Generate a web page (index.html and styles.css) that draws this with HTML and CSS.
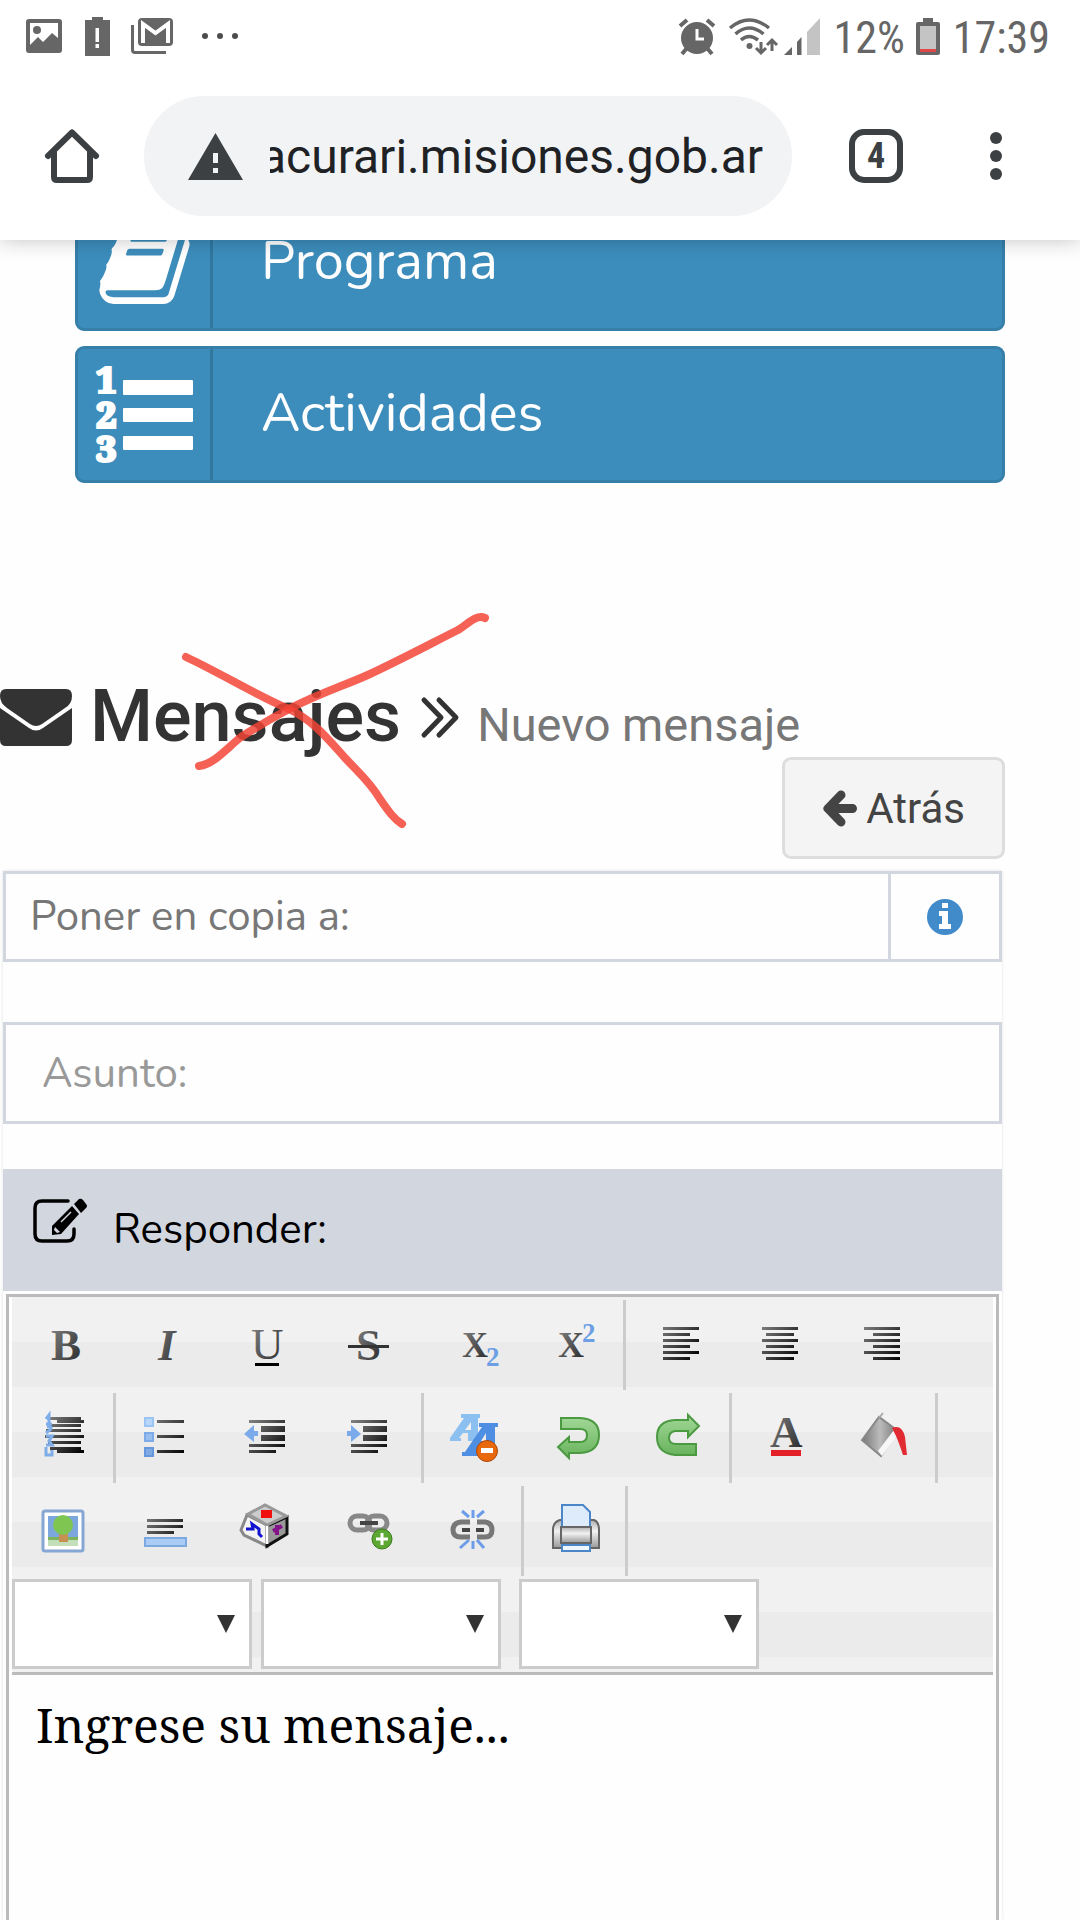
FILE: index.html
```html
<!DOCTYPE html>
<html lang="es">
<head>
<meta charset="utf-8">
<meta name="viewport" content="width=device-width, initial-scale=1">
<title>Mensajes - Nuevo mensaje</title>
<link rel="stylesheet" href="styles.css">
</head>
<body>
<header class="top">
  <div class="status">
    <svg class="status-photo" width="36" height="34" viewBox="0 0 36 34"><path fill="#666" fill-rule="evenodd" d="M3 0H33Q36 0 36 3V31Q36 34 33 34H3Q0 34 0 31V3Q0 0 3 0ZM4 4V26L12 18L17 23L26 14L32 19V4Z"/><circle cx="11" cy="11" r="4" fill="#666"/></svg>
    <svg class="status-alert" width="25" height="39" viewBox="0 0 25 39"><path fill="#666" fill-rule="evenodd" d="M7 0H18V3H25V39H0V3H7ZM10.500 11V25H14V11ZM10.500 27V31H14V27Z"/></svg>
    <svg class="status-mail" width="42" height="36" viewBox="0 0 42 36"><path fill="none" stroke="#666" stroke-width="3" d="M1.500 7V32Q1.500 34.500 4 34.500H35"/><rect x="7" y="0" width="35" height="28" rx="4" fill="#666"/><path fill="none" stroke="#fff" stroke-width="4" d="M12 25V6L24.500 15L37 6V25"/></svg>
    <svg class="status-more" width="38" height="8" viewBox="0 0 38 8"><g fill="#4c4c4c"><circle cx="4" cy="4" r="3"/><circle cx="19" cy="4" r="3"/><circle cx="34" cy="4" r="3"/></g></svg>
    <svg class="status-alarm" width="36" height="37" viewBox="0 0 36 37"><g fill="none" stroke="#666" stroke-width="4"><path d="M1 8L8 2M35 8L28 2M8 30L3 36M28 30L33 36"/></g><circle cx="18" cy="20" r="16" fill="#666"/><path fill="none" stroke="#fff" stroke-width="3" d="M18 11V21H25"/></svg>
    <svg class="status-wifi" width="49" height="37" viewBox="0 0 49 37"><g fill="none" stroke="#666" stroke-width="3.500"><path d="M1 10Q20 -6 40 10M6.500 16Q20 4 34.500 16M12 22Q20 15 29 22"/><path stroke-width="3" d="M32 24V35M27 30L32 35L37 30M43 33V22M38 27L43 22L48 27"/></g><circle cx="20.500" cy="28" r="3" fill="#666"/></svg>
    <svg class="status-signal" width="36" height="37" viewBox="0 0 36 37"><path fill="#c4c4c4" d="M23 14L36 0V37H23Z"/><path fill="#666" d="M0 37L8 29V37ZM13 24L17.500 19V37H13Z"/></svg>
    <span class="status-text status-charge">12%</span>
    <svg class="status-battery" width="24" height="37" viewBox="0 0 24 37"><path fill="#666" d="M7 0H17V4H22Q24 4 24 6V35Q24 37 22 37H2Q0 37 0 35V6Q0 4 2 4H7Z"/><path fill="#c4c4c4" d="M4 8H20V33H4Z"/><path fill="#e04848" d="M4 31H20V34H4Z"/></svg>
    <time class="status-text">17:39</time>
  </div>
  <nav class="browser" aria-label="Navegador">
    <button class="icon-button" aria-label="Inicio"><svg width="54" height="54" viewBox="0 0 54 54"><path fill="none" stroke="#3c4043" stroke-width="6" stroke-linecap="round" stroke-linejoin="round" d="M3 27L27 3.500L51 27M9 23V48Q9 51 12 51H42Q45 51 45 48V23"/></svg></button>
    <div class="address">
      <svg width="55" height="47" viewBox="0 0 55 47"><path fill="#3c4043" fill-rule="evenodd" d="M27.500 0L55 47H0ZM25 20V30H30V20ZM25 35V40H30V35Z"/></svg>
      <input class="url" type="text" dir="rtl" value="acurari.misiones.gob.ar" aria-label="Dirección">
    </div>
    <button class="icon-button tabs" aria-label="Pestañas">4</button>
    <button class="icon-button" aria-label="Menú"><svg width="12" height="50" viewBox="0 0 12 50"><g fill="#3c4043"><circle cx="6" cy="7" r="6"/><circle cx="6" cy="25" r="6"/><circle cx="6" cy="43" r="6"/></g></svg></button>
  </nav>
</header>

<main class="page">
  <div class="sections">
    <a class="section" href="#programa">
      <span class="section-icon"><svg width="97" height="97" viewBox="0 0 1792 1792"><path fill="#fff" d="M1703 478q40 57 18 129l-275 906q-19 64-76.500 107.500t-122.500 43.500h-923q-77 0-148.500-53.500t-99.500-131.500q-24-67-2-127 0-4 3-27t4-37q1-8-3-21.500t-3-19.500q2-11 8-21t16.500-23.500 16.500-23.500q23-38 45-91.500t30-91.500q3-10 .5-30t-.5-28q3-11 17-28t17-23q21-36 42-92t25-90q1-9-2.500-32t.5-28q4-13 22-30.500t22-22.500q19-26 42.500-84.500t27.500-96.500q1-8-3-25.500t-2-26.500q2-8 9-18t18-23 17-21q8-12 16.500-30.500t15-35 16-36 19.500-32 26.500-23.500 36-11.500 47.500 5.500l-1 3q38-9 51-9h761q74 0 114 56t18 130l-274 906q-36 119-71.500 153.500t-128.500 34.500h-869q-27 0-38 15-11 16-1 43 24 70 144 70h923q29 0 56-15.500t35-41.500l300-987q7-22 5-57 38 15 59 43zm-1064 2q-4 13 2 22.500t20 9.500h608q13 0 25.500-9.500t16.500-22.500l21-64q4-13-2-22.500t-20-9.500h-608q-13 0-25.500 9.500t-16.500 22.500zm-83 256q-4 13 2 22.500t20 9.500h608q13 0 25.500-9.500t16.500-22.500l21-64q4-13-2-22.500t-20-9.500h-608q-13 0-25.500 9.500t-16.500 22.500z"/></svg></span>
      <span class="section-name">Programa</span>
    </a>
    <a class="section" href="#actividades">
      <span class="section-icon"><svg width="97" height="97" viewBox="0 0 97 97"><g class="list-digit"><text x="0" y="27">1</text><text x="0" y="62">2</text><text x="0" y="96">3</text></g><g fill="#fff"><rect x="27" y="14" width="70" height="15" rx="1"/><rect x="27" y="42" width="70" height="14" rx="1"/><rect x="27" y="70" width="70" height="14" rx="1"/></g></svg></span>
      <span class="section-name">Actividades</span>
    </a>
  </div>

  <div class="heading">
    <h1 class="title">
      <svg class="title-mail" width="72" height="57" viewBox="0 0 72 57"><path fill="#333" d="M6 0H66Q72 0 72 7Q72 15 65 19L42 35Q36 39 30 35L7 19Q0 14 0 7Q0 0 6 0ZM0 19L29 39Q36 44 43 39L72 19V51Q72 57 66 57H6Q0 57 0 51Z"/></svg>
      <span class="title-main">Mensajes</span>
      <svg class="title-arrows" width="38" height="41" viewBox="0 0 38 41"><path fill="none" stroke="#333" stroke-width="5" stroke-linecap="round" stroke-linejoin="round" d="M3 3L20 20.500L3 38M18 3L35 20.500L18 38"/></svg>
      <small class="title-sub">Nuevo mensaje</small>
    </h1>
    <svg class="scrawl" width="320" height="230" viewBox="0 0 320 230" aria-hidden="true"><g fill="none" stroke="#f44336" stroke-width="8" stroke-linecap="round" stroke-linejoin="round" stroke-opacity=".84"><path d="M16 46C50 62 90 86 119 98C144 110 158 128 176 148C190 163 200 171 210 188C219 201 224 208 232 213"/><path d="M29 155C44 153 56 138 71 126C90 114 104 106 119 98C150 82 176 74 200 63C236 46 262 32 288 19C298 13 306 3 315 7"/></g></svg>
  </div>

  <button class="back"><svg width="35" height="37" viewBox="0 0 35 37"><path fill="none" stroke="#444" stroke-width="9" stroke-linecap="round" stroke-linejoin="round" d="M19 5L6 18.500L19 32M7 18.500H30.500"/></svg>Atrás</button>

  <form class="compose">
    <div class="copy-row">
      <input class="field field-copy" type="text" placeholder="Poner en copia a:" aria-label="Poner en copia a">
      <button class="info" type="button" aria-label="Información"><svg width="36" height="36" viewBox="0 0 36 36"><circle cx="18" cy="18" r="18" fill="#428bca"/><path fill="#fff" d="M15 4H21V9H15ZM12 12H21V25H24V30H12V25H15V17H12Z"/></svg></button>
    </div>
    <input class="field field-subject" type="text" placeholder="Asunto:" aria-label="Asunto">

    <label class="reply" for="message">
      <svg width="54" height="44" viewBox="0 0 54 44"><path fill="none" stroke="#000" stroke-width="3.500" stroke-linecap="round" d="M35 2H9Q2 2 2 9V35Q2 42 9 42H34Q41 42 41 35V30"/><path d="M41 5L46 0Q48 -1 50 1L53 5Q55 7 53 9L48 14ZM39 7L46 15L28 35L19 36L19 27Z"/><path stroke="#d2d6de" stroke-width="1.500" fill="none" d="M28 23L38 13"/><path fill="#d2d6de" d="M22 28L27 33L24 34L21 31Z"/></svg>
      Responder:
    </label>

    <div class="editor">
      <div class="tools">
        <svg class="defs" width="0" height="0" aria-hidden="true"><defs>
          <linearGradient id="ink" x1="0" y1="0" x2="1" y2="1"><stop offset="0" stop-color="#888"/><stop offset="1" stop-color="#222"/></linearGradient>
          <linearGradient id="line" gradientUnits="userSpaceOnUse" x1="30" y1="25" x2="70" y2="60"><stop offset="0" stop-color="#888"/><stop offset="1" stop-color="#000"/></linearGradient>
          <linearGradient id="leaf" x1="0" y1="0" x2="0" y2="1"><stop offset="0" stop-color="#a0d796"/><stop offset="1" stop-color="#69b35d"/></linearGradient>
          <linearGradient id="steel" x1="0" y1="0" x2="1" y2="0"><stop offset="0" stop-color="#777"/><stop offset=".5" stop-color="#bbb"/><stop offset="1" stop-color="#777"/></linearGradient>
          <linearGradient id="shell" x1="0" y1="0" x2="0" y2="1"><stop offset="0" stop-color="#b0b0b0"/><stop offset=".4" stop-color="#f2f2f2"/><stop offset="1" stop-color="#999"/></linearGradient>
        </defs></svg>
        <div class="tool-row">
          <button class="tool" type="button" aria-label="Negrita"><svg width="102" height="90"><text class="glyph glyph-bold" x="39" y="60">B</text></svg></button>
          <button class="tool" type="button" aria-label="Cursiva"><svg width="102" height="90"><text class="glyph glyph-bold glyph-italic" x="44" y="60">I</text></svg></button>
          <button class="tool" type="button" aria-label="Subrayado"><svg width="102" height="90"><text class="glyph" x="35" y="59">U</text><path d="M39 63h24v3H39z"/></svg></button>
          <button class="tool" type="button" aria-label="Tachado"><svg width="102" height="90"><text class="glyph glyph-bold" x="38" y="60">S</text><path fill="#333" d="M30 45h41v3H30z"/></svg></button>
          <button class="tool" type="button" aria-label="Subíndice"><svg width="102" height="90"><text class="glyph glyph-x" x="42" y="57">X</text><text class="glyph-two" x="66" y="66">2</text></svg></button>
          <button class="tool" type="button" aria-label="Superíndice"><svg width="102" height="90"><text class="glyph glyph-x" x="36" y="57">X</text><text class="glyph-two" x="60" y="42">2</text></svg></button>
          <span class="divider"></span>
          <button class="tool" type="button" aria-label="Alinear a la izquierda"><svg width="102" height="90"><path fill="url(#line)" d="M37 27h36v3H37zM37 33h27v3H37zM37 39h36v3H37zM37 45h27v3H37zM37 51h36v3H37zM37 57h27v3H37z"/></svg></button>
          <button class="tool" type="button" aria-label="Centrar"><svg width="102" height="90"><path fill="url(#line)" d="M34 27h36v3H34zM38 33h28v3H38zM34 39h36v3H34zM38 45h28v3H38zM34 51h36v3H34zM38 57h28v3H38z"/></svg></button>
          <button class="tool" type="button" aria-label="Alinear a la derecha"><svg width="102" height="90"><path fill="url(#line)" d="M34 27h36v3H34zM43 33h27v3H43zM34 39h36v3H34zM43 45h27v3H43zM34 51h36v3H34zM43 57h27v3H43z"/></svg></button>
        </div>
        <div class="tool-row">
          <button class="tool" type="button" aria-label="Lista numerada"><svg width="102" height="90"><path fill="url(#line)" d="M36 24h33v3H36zM45 27h27v3H45zM36 31h33v3H36zM34 36h35v3H34zM33 42h39v3H33zM36 48h33v3H36zM38 54h31v3H38zM45 57h27v3H45z"/><path fill="none" stroke="#7fadea" stroke-width="3" d="M34 26L37 22V30M34 31H40M35 34Q41 33 38 37L34 40M34 43H40L37 48L40 52L34 52M34 54V62H40V57"/></svg></button>
          <span class="divider"></span>
          <button class="tool" type="button" aria-label="Lista"><svg width="102" height="90"><g stroke-width="2"><path fill="#b8d6f8" stroke="#9cc4f3" d="M29 25h8v8h-8z"/><path fill="#98bef0" stroke="#7dabea" d="M29 40h8v8h-8z"/><path fill="#7fa9e2" stroke="#6696dc" d="M29 55h8v8h-8z"/></g><path fill="url(#line)" d="M41 27h27v3H41zM41 42h27v3H41zM41 57h27v3H41z"/></svg></button>
          <button class="tool" type="button" aria-label="Reducir sangría"><svg width="102" height="90"><path fill="url(#line)" d="M31 27h36v3H31zM43 33h24v6H43zM43 42h24v6H43zM31 51h36v3H31zM31 57h27v3H31z"/><path fill="#7aaaea" d="M26 41L36 32V38H40V43H36V49Z"/></svg></button>
          <button class="tool" type="button" aria-label="Aumentar sangría"><svg width="102" height="90"><path fill="url(#line)" d="M31 27h36v3H31zM43 33h24v6H43zM43 42h24v6H43zM31 51h36v3H31zM31 57h27v3H31z"/><path fill="#7aaaea" d="M41 41L31 32V38H27V43H31V49Z"/></svg></button>
          <span class="divider"></span>
          <button class="tool" type="button" aria-label="Quitar formato"><svg width="102" height="90"><path fill="#8cc0f0" d="M37 21H56V25H54V48H44V40H39L35 45H37V48H26V45L40 25H37ZM47 29L41 37H47Z"/><path fill="#4e8fe4" d="M55 30H74V34H71V58H60V52H56L52 59H54V63H38V59H41L58 34H55ZM62 40L57 48H62Z"/><circle cx="63" cy="58" r="10.500" fill="#e8690c" stroke="#b04505"/><path fill="#fff" d="M57 55h12v5H57z"/></svg></button>
          <button class="tool" type="button" aria-label="Deshacer"><svg width="102" height="90"><path fill="url(#leaf)" stroke="#4b9a42" stroke-width="2" d="M35 25H54Q73 26 73 42Q73 59 54 60H43V65L32 54L43 44V49H54Q61 49 61 42Q61 36 54 36H35Z"/></svg></button>
          <button class="tool" type="button" aria-label="Rehacer"><svg width="102" height="90"><path fill="url(#leaf)" stroke="#4b9a42" stroke-width="2" d="M68 62H47Q29 60 29 44Q29 28 47 27H60V22L71 33L60 44V38H47Q41 39 41 45Q41 51 48 51H68Z"/></svg></button>
          <span class="divider"></span>
          <button class="tool" type="button" aria-label="Color de texto"><svg width="102" height="90"><text class="glyph glyph-bold" x="38" y="54">A</text><path fill="#e32028" d="M39 57h30v6H39z"/></svg></button>
          <button class="tool" type="button" aria-label="Color de fondo"><svg width="102" height="90"><path fill="url(#steel)" stroke="#888" stroke-width="2" d="M28 47L45 24L64 38L47 63Z"/><path fill="#f7f7f7" d="M44 58L60 37L65 40L48 63Z"/><path stroke="#aaa" stroke-width="2" fill="none" d="M45 25L49 20"/><path fill="#e22a32" d="M58 35Q68 31 71 44L73 62L69 62Q65 50 62 43Z"/></svg></button>
          <span class="divider"></span>
        </div>
        <div class="tool-row">
          <button class="tool" type="button" aria-label="Imagen"><svg width="102" height="90"><rect x="31" y="25" width="40" height="40" rx="2" fill="#fff" stroke="#86a7d4" stroke-width="3"/><path fill="#7ba7dc" d="M36 30h30v22H36z"/><path fill="#c3dfb9" d="M36 52h30v8H36z"/><path fill="#7db35c" d="M36 51h30v3H36z"/><path fill="#c78f50" d="M47 48h9v8h-9z"/><circle cx="51" cy="39" r="10" fill="#7fc552"/></svg></button>
          <button class="tool" type="button" aria-label="Línea horizontal"><svg width="102" height="90"><path fill="url(#line)" d="M33 33h36v3H33zM33 39h36v3H33zM33 45h27v3H33z"/><path fill="#a9cbf4" stroke="#7da9e2" stroke-width="2" d="M31 52h41v8H31z"/></svg></button>
          <button class="tool" type="button" aria-label="Subir imagen"><svg width="102" height="90"><path fill="#f4f4f4" stroke="#888" stroke-width="3" d="M31 29L25 44L28 49L51 60V39Z"/><path fill="#999" stroke="#111" stroke-width="3" d="M71 31V48L51 60V40Z"/><path fill="#ccc" stroke="#999" stroke-width="3" d="M32 28L49 19L70 30L51 39Z"/><path stroke="#fff" stroke-width="3" d="M51 40V58"/><path fill="#f01010" d="M45 24h11v8H45z"/><path fill="none" stroke="#1212d0" stroke-width="3" d="M30 43H37L36 38L43 43V48L46 51"/><path fill="none" stroke="#84128a" stroke-width="4" d="M57 45L66 40M61 39V49"/></svg></button>
          <button class="tool" type="button" aria-label="Insertar enlace"><svg width="102" height="90"><g fill="none" stroke="#888" stroke-width="5"><rect x="32" y="30" width="20" height="14" rx="7"/><rect x="49" y="30" width="20" height="14" rx="7"/></g><path stroke="#444" stroke-width="4" d="M42 37H60"/><circle cx="64" cy="53" r="10" fill="#5ca832" stroke="#3c7b1c"/><path fill="none" stroke="#fff" stroke-width="3" d="M64 47V59M58 53H70"/></svg></button>
          <button class="tool" type="button" aria-label="Quitar enlace"><svg width="102" height="90"><g fill="none" stroke="#777" stroke-width="5"><path d="M50 36H41Q33 37 33 44Q33 51 41 51H50M57 36H65Q72 37 72 44Q72 51 65 51H57"/><path stroke="#444" stroke-width="4" d="M42 44H50M56 44H64"/></g><path fill="none" stroke="#6d9de8" stroke-width="3" d="M42 25L49 31M64 25L57 31M53 24V32M40 62L49 54M64 62L57 54M53 63V55"/></svg></button>
          <span class="divider"></span>
          <button class="tool" type="button" aria-label="Imprimir"><svg width="102" height="90"><path fill="url(#shell)" stroke="#666" stroke-width="2" d="M36 34H70Q75 36 75 44V62H29V44Q29 36 36 34Z"/><path fill="#ddebfb" stroke="#4a86c8" stroke-width="2" d="M38 41V19H59L66 26V41Z"/><path fill="url(#shell)" stroke="#666" stroke-width="2" d="M37 41H67V57H37Z"/><path fill="#eef5fd" stroke="#4a86c8" stroke-width="2" d="M38 59H66V65H38Z"/></svg></button>
          <span class="divider"></span>
        </div>
        <div class="tool-row">
          <span class="picker"><select aria-label="Tamaño"><option></option></select></span>
          <span class="picker"><select aria-label="Fuente"><option></option></select></span>
          <span class="picker picker-apart"><select aria-label="Formato"><option></option></select></span>
        </div>
      </div>
      <textarea class="message" id="message">Ingrese su mensaje...</textarea>
    </div>
  </form>
</main>
</body>
</html>
```
FILE: styles.css
```css
* {
  box-sizing: border-box;
}

body {
  margin: 0;
  min-height: 100vh;
  display: flex;
  flex-direction: column;
  background: #fefefe;
  font-family: Roboto, sans-serif;
  color: #333;
}

svg {
  display: block;
  flex: none;
  overflow: visible;
}

button,
input,
select,
textarea {
  margin: 0;
  padding: 0;
  border: 0;
  border-radius: 0;
  background: none;
  font: inherit;
  color: inherit;
  outline: 0;
}

/* Status bar and browser bar */

.top {
  position: relative;
  z-index: 1;
  background: #fff;
  box-shadow: 0 0 20px rgba(0, 0, 0, 0.24);
}

.status {
  display: flex;
  align-items: center;
  height: 72px;
  padding: 0 30px 0 26px;
}

.status-alert {
  margin-left: 23px;
}

.status-mail {
  margin-left: 21px;
}

.status-more {
  margin-left: 28px;
}

.status-alarm {
  margin-left: auto;
}

.status-wifi {
  margin-left: 14px;
}

.status-signal {
  margin-left: 6px;
}

.status-text {
  padding-top: 3px;
  font: 44px "Roboto Condensed", Roboto, sans-serif;
  color: #666;
}

.status-charge {
  margin: 0 11px 0 14px;
}

.status-battery {
  margin-right: 13px;
}

.browser {
  display: flex;
  align-items: center;
  height: 168px;
  padding: 0 78px 0 45px;
}

.icon-button {
  flex: none;
}

.address {
  flex: 1;
  min-width: 0;
  display: flex;
  align-items: center;
  gap: 27px;
  height: 120px;
  margin: 0 57px 0 45px;
  padding: 0 29px 0 44px;
  border-radius: 60px;
  background: #f1f3f4;
}

.url {
  flex: 1;
  min-width: 0;
  font-size: 48px;
  color: #202124;
}

.tabs {
  width: 54px;
  height: 54px;
  margin-right: 87px;
  border: 6px solid #3c4043;
  border-radius: 15px;
  font: bold 36px/42px "Roboto Condensed", Roboto, sans-serif;
  color: #3c4043;
}

/* Page */

.page {
  flex: 1;
  display: flex;
  flex-direction: column;
  overflow: hidden;
}

.sections {
  display: flex;
  flex-direction: column;
  gap: 15px;
  margin: -46px 75px 0;
}

.section {
  display: flex;
  height: 137px;
  border: 3px solid #367fa9;
  border-radius: 9px;
  background: #3c8dbc;
  color: #fff;
  text-decoration: none;
}

.section-icon {
  display: flex;
  align-items: center;
  justify-content: center;
  width: 135px;
  border-right: 3px solid #3078a0;
}

.section-name {
  padding-left: 48px;
  font: 54px/129px Nunito, sans-serif;
}

.list-digit {
  font: 900 36px "Noto Serif", serif;
  fill: #fff;
  stroke: #fff;
  stroke-width: 2px;
}

.heading {
  position: relative;
  margin-top: 194px;
}

.title {
  display: flex;
  align-items: center;
  margin: 0;
  font-size: 72px;
  font-weight: 500;
  line-height: 80px;
}

.title-main {
  align-self: baseline;
  margin: 0 20px 0 18px;
}

.title-sub {
  align-self: baseline;
  margin-left: 18px;
  font-size: 47px;
  font-weight: 400;
  line-height: 48px;
  color: #777;
}

/* Hand-drawn cross laid over the heading */
.scrawl {
  position: absolute;
  left: 170px;
  top: -66px;
}

.back {
  display: flex;
  align-items: center;
  gap: 9px;
  align-self: flex-end;
  height: 102px;
  margin-right: 75px;
  padding: 0 37px;
  border: 3px solid #ddd;
  border-radius: 9px;
  background: #f4f4f4;
  font-size: 42px;
  color: #444;
}

.compose {
  flex: 1;
  display: flex;
  flex-direction: column;
  margin: 12px 78px 0 3px;
  box-shadow: 0 0 3px rgba(0, 0, 0, 0.12);
  font: 42px Nunito, sans-serif;
}

.copy-row {
  display: flex;
  height: 91px;
  border: 3px solid #d2d6de;
}

.field::placeholder {
  color: #999;
  opacity: 1;
}

.field-copy {
  flex: 1;
  min-width: 0;
  padding-left: 24px;
}

.field-copy::placeholder {
  color: #777;
}

.info {
  display: flex;
  align-items: center;
  justify-content: center;
  width: 111px;
  border-left: 3px solid #d2d6de;
}

.field-subject {
  height: 102px;
  margin: 60px 0 45px;
  padding-left: 36px;
  border: 3px solid #d2d6de;
}

.reply {
  display: flex;
  align-items: baseline;
  gap: 26px;
  padding-left: 30px;
  background: #d2d6de;
  line-height: 122px;
  color: #000;
}

/* Rich text editor */

.editor {
  flex: 1;
  display: flex;
  flex-direction: column;
  margin: 3px 3px 0;
  padding: 0 3px;
  border: 3px solid #bbb;
  border-bottom: 0;
}

.tools {
  display: flex;
  flex-direction: column;
  gap: 3px;
  padding: 3px 0;
  border-bottom: 3px solid #bbb;
  background: repeating-linear-gradient(#f1f1f1 0 45px, #ebebeb 45px 90px);
}

.defs {
  position: absolute;
}

.tool-row {
  display: flex;
  height: 90px;
}

.tool {
  flex: none;
  width: 102px;
}

.divider {
  width: 3px;
  margin-left: -1px;
  background: #ccc;
}

.glyph {
  font: 45px "Liberation Serif", serif;
  fill: url(#ink);
}

.glyph-bold {
  font-weight: bold;
}

.glyph-italic {
  font-style: italic;
}

.glyph-x {
  font-size: 36px;
  font-weight: bold;
}

.glyph-two {
  font: bold 27px "Liberation Serif", serif;
  fill: #6c9fe4;
}

.picker {
  position: relative;
  width: 240px;
  margin-right: 9px;
}

.picker-apart {
  margin-left: 9px;
}

.picker select {
  appearance: none;
  width: 100%;
  height: 100%;
  border: 3px solid #ccc;
  background: #fff;
}

.picker::after {
  content: "";
  position: absolute;
  top: 36px;
  right: 17px;
  width: 18px;
  height: 18px;
  background: #333;
  clip-path: polygon(0 0, 100% 0, 50% 100%);
  pointer-events: none;
}

.message {
  flex: 1;
  min-height: 245px;
  padding: 17px 24px;
  resize: none;
  font: 48px/66px "Noto Serif", serif;
  color: #000;
}
```
